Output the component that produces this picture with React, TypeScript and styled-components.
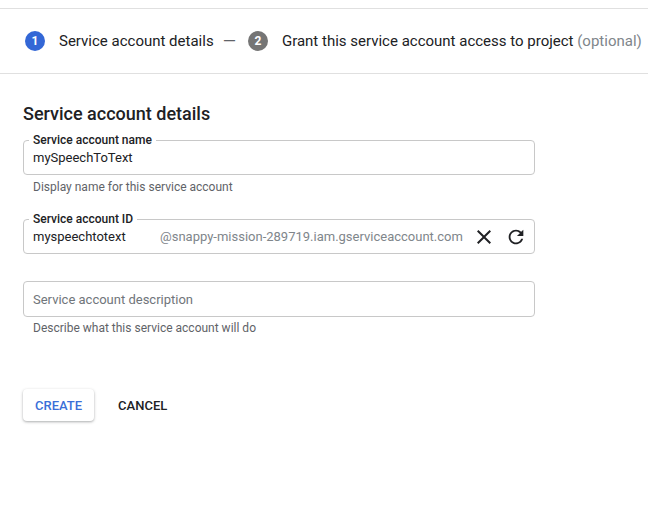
import React from "react";
import styled, { createGlobalStyle } from "styled-components";

const Global = createGlobalStyle`
  html, body { margin: 0; padding: 0; background: #fff; }
  body { font-family: Roboto, "Noto Sans", Arial, sans-serif; color: #202124; }
  * { box-sizing: border-box; }
`;

const Page = styled.div`
  padding-top: 8px;
  width: 648px;
  height: 505px;
  overflow: hidden;
`;

const Stepper = styled.div`
  height: 66px;
  border-top: 1px solid #e0e0e0;
  border-bottom: 1px solid #e0e0e0;
  display: flex;
  align-items: center;
  padding-left: 25px;
  white-space: nowrap;
`;

const StepNum = styled.span<{ $active?: boolean }>`
  width: 20px;
  height: 20px;
  border-radius: 50%;
  background: ${(p) => (p.$active ? "#3367d6" : "#757575")};
  color: #fff;
  font-size: 12px;
  font-weight: 700;
  display: flex;
  align-items: center;
  justify-content: center;
  flex: none;
`;

const StepLabel = styled.span`
  margin-left: 14px;
  font-size: 15px;
  color: #202124;
`;

const Optional = styled.span`
  color: #80868b;
`;

const Dash = styled.span`
  margin: 0 12px 0 9px;
  font-size: 17px;
  color: #5f6368;
`;

const Content = styled.div`
  padding: 0 0 0 23px;
  width: 535px;
`;

const Heading = styled.h2`
  margin: 28px 0 0;
  font-size: 18px;
  line-height: 24px;
  font-weight: 500;
  color: #202124;
`;

const FieldSet = styled.fieldset<{ $top: number }>`
  margin: ${(p) => p.$top}px 0 0;
  padding: 0 2px 6px 9px;
  border: 1px solid #c8c8c8;
  border-radius: 4px;
  min-width: 0;
`;

const Legend = styled.legend`
  padding: 0 4px;
  margin-left: -4px;
  font-size: 12px;
  line-height: 14px;
  font-weight: 500;
  color: #202124;
`;

const Row = styled.div`
  display: flex;
  align-items: center;
  height: 21px;
`;

const Value = styled.span<{ $w?: number }>`
  font-size: 13px;
  color: #202124;
  width: ${(p) => (p.$w ? `${p.$w}px` : "auto")};
  flex: none;
`;

const Suffix = styled.span`
  font-size: 13px;
  color: #80868b;
  flex: 1;
  white-space: nowrap;
`;

const IconBtn = styled.span`
  width: 32px;
  height: 21px;
  display: flex;
  align-items: center;
  justify-content: center;
  color: #202124;
  flex: none;
`;

const Plain = styled.div<{ $top: number }>`
  margin-top: ${(p) => p.$top}px;
  height: 36px;
  border: 1px solid #c8c8c8;
  border-radius: 4px;
  display: flex;
  align-items: center;
  padding: 0 9px;
  font-size: 13px;
  color: #70757a;
`;

const Helper = styled.div<{ $top?: number }>`
  margin-top: ${(p) => p.$top ?? 3}px;
  padding-left: 10px;
  font-size: 12px;
  line-height: 16px;
  color: #5f6368;
`;

const Actions = styled.div`
  margin-top: 53px;
  display: flex;
  align-items: center;
  gap: 12px;
`;

const Button = styled.button<{ $raised?: boolean }>`
  height: 32px;
  padding: 0 12px;
  border: none;
  border-radius: 4px;
  background: #fff;
  font-family: Roboto, "Noto Sans", Arial, sans-serif;
  font-size: 13px;
  font-weight: 500;
  color: ${(p) => (p.$raised ? "#3b6fd8" : "#202124")};
  box-shadow: ${(p) =>
    p.$raised
      ? "0 1px 3px rgba(60,64,67,0.3), 0 1px 2px rgba(60,64,67,0.15)"
      : "none"};
  cursor: pointer;
`;

const CloseIcon = () => (
  <svg width="24" height="24" viewBox="0 0 24 24" fill="currentColor">
    <path d="M19 6.41L17.59 5 12 10.59 6.41 5 5 6.41 10.59 12 5 17.59 6.41 19 12 13.41 17.59 19 19 17.59 13.41 12z" />
  </svg>
);

const RefreshIcon = () => (
  <svg width="22" height="22" viewBox="0 0 24 24" fill="currentColor">
    <path d="M17.65 6.35C16.2 4.9 14.21 4 12 4c-4.42 0-7.99 3.58-7.99 8s3.57 8 7.99 8c3.73 0 6.84-2.55 7.73-6h-2.08c-.82 2.33-3.04 4-5.65 4-3.31 0-6-2.69-6-6s2.69-6 6-6c1.66 0 3.14.69 4.22 1.78L13 11h7V4l-2.35 2.35z" />
  </svg>
);

export default function App() {
  return (
    <Page>
      <Global />
      <Stepper>
        <StepNum $active>1</StepNum>
        <StepLabel>Service account details</StepLabel>
        <Dash>—</Dash>
        <StepNum>2</StepNum>
        <StepLabel>
          Grant this service account access to project <Optional>(optional)</Optional>
        </StepLabel>
      </Stepper>
      <Content>
        <Heading>Service account details</Heading>
        <FieldSet $top={7}>
          <Legend>Service account name</Legend>
          <Row>
            <Value>mySpeechToText</Value>
          </Row>
        </FieldSet>
        <Helper $top={4}>Display name for this service account</Helper>
        <FieldSet $top={17}>
          <Legend>Service account ID</Legend>
          <Row>
            <Value $w={127}>myspeechtotext</Value>
            <Suffix>@snappy-mission-289719.iam.gserviceaccount.com</Suffix>
            <IconBtn>
              <CloseIcon />
            </IconBtn>
            <IconBtn>
              <RefreshIcon />
            </IconBtn>
          </Row>
        </FieldSet>
        <Plain $top={27}>Service account description</Plain>
        <Helper>Describe what this service account will do</Helper>
        <Actions>
          <Button $raised>CREATE</Button>
          <Button>CANCEL</Button>
        </Actions>
      </Content>
    </Page>
  );
}
